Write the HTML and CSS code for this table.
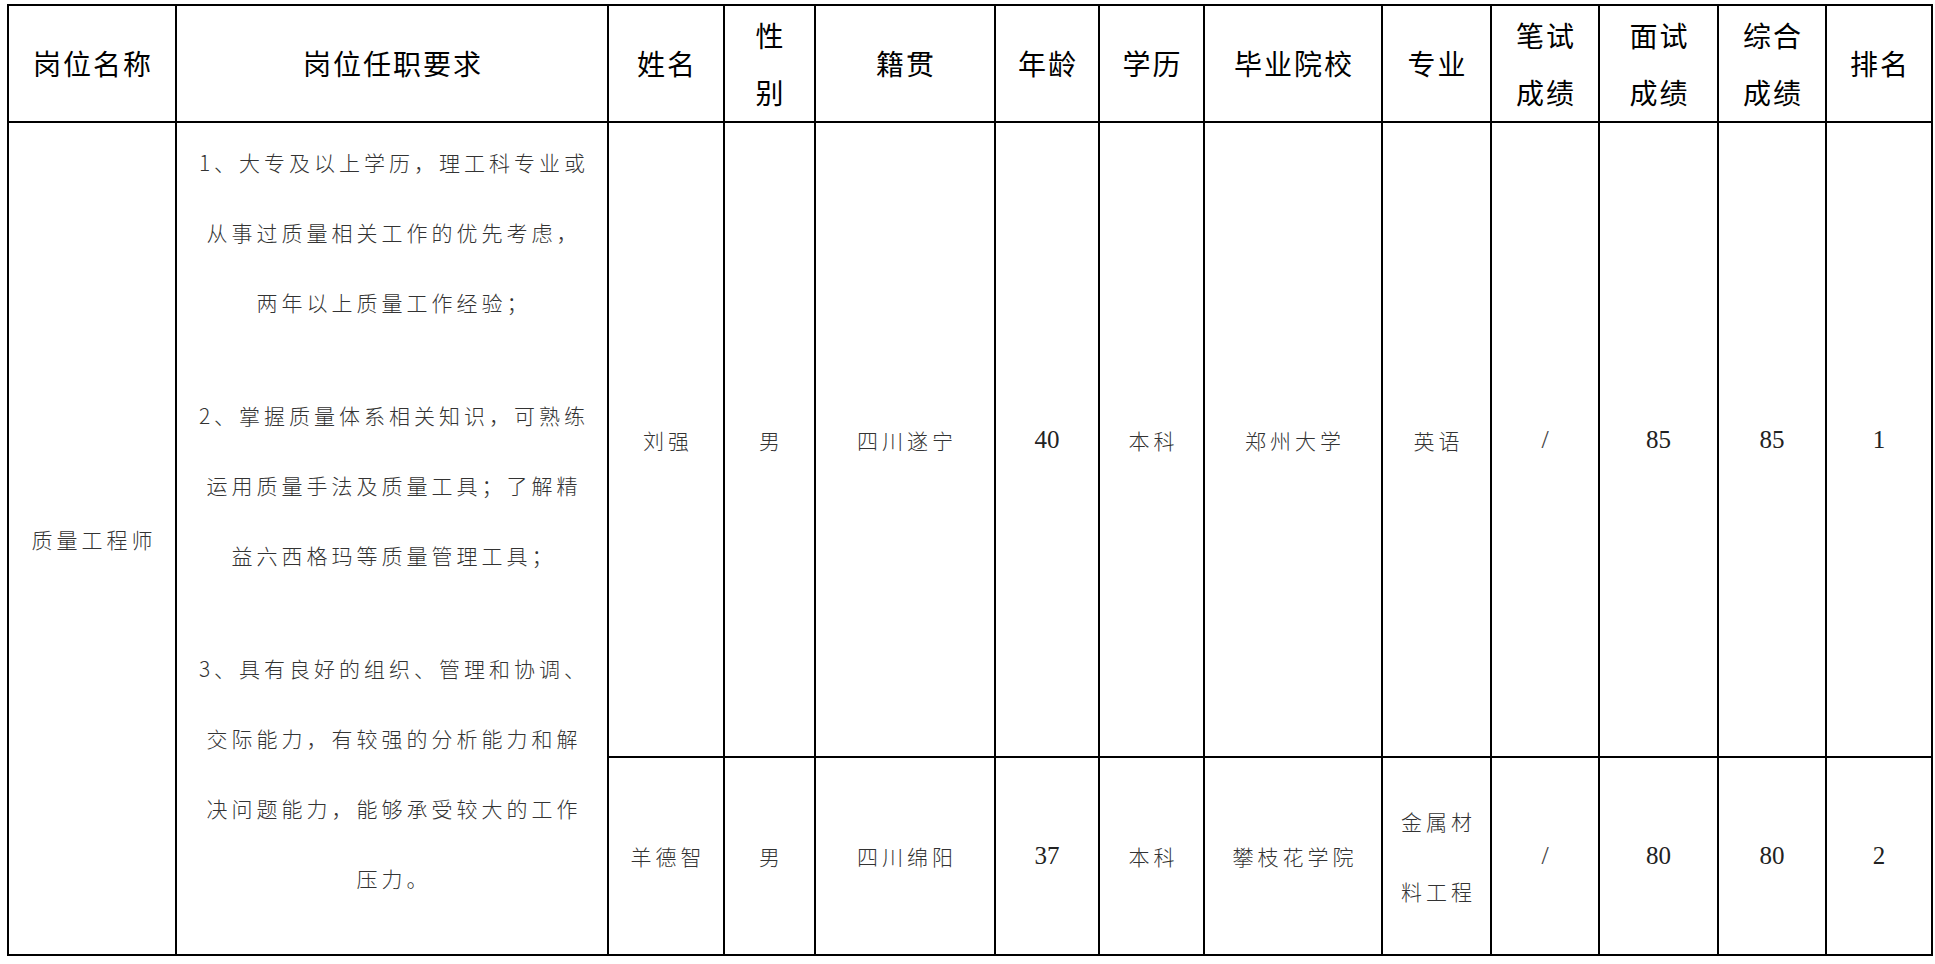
FILE: index.html
```html
<!DOCTYPE html>
<html lang="zh-CN">
<head>
<meta charset="utf-8">
<title>岗位成绩表</title>
<link rel="stylesheet" href="styles.css">
</head>
<body>
<div class="sheet">
  <div class="cell head">岗位名称</div>
  <div class="cell head">岗位任职要求</div>
  <div class="cell head">姓名</div>
  <div class="cell head">性<br>别</div>
  <div class="cell head">籍贯</div>
  <div class="cell head">年龄</div>
  <div class="cell head">学历</div>
  <div class="cell head">毕业院校</div>
  <div class="cell head">专业</div>
  <div class="cell head">笔试<br>成绩</div>
  <div class="cell head">面试<br>成绩</div>
  <div class="cell head">综合<br>成绩</div>
  <div class="cell head">排名</div>

  <div class="cell body tall">质量工程师</div>
  <div class="cell body tall req">
    <p>1、大专及以上学历，理工科专业或<br>从事过质量相关工作的优先考虑，<br>两年以上质量工作经验；</p>
    <p>2、掌握质量体系相关知识，可熟练<br>运用质量手法及质量工具；了解精<br>益六西格玛等质量管理工具；</p>
    <p>3、具有良好的组织、管理和协调、<br>交际能力，有较强的分析能力和解<br>决问题能力，能够承受较大的工作<br>压力。</p>
  </div>

  <div class="cell body">刘强</div>
  <div class="cell body">男</div>
  <div class="cell body">四川遂宁</div>
  <div class="cell body num">40</div>
  <div class="cell body">本科</div>
  <div class="cell body">郑州大学</div>
  <div class="cell body">英语</div>
  <div class="cell body num slash">/</div>
  <div class="cell body num">85</div>
  <div class="cell body num">85</div>
  <div class="cell body num">1</div>

  <div class="cell body">羊德智</div>
  <div class="cell body">男</div>
  <div class="cell body">四川绵阳</div>
  <div class="cell body num">37</div>
  <div class="cell body">本科</div>
  <div class="cell body">攀枝花学院</div>
  <div class="cell body">金属材<br>料工程</div>
  <div class="cell body num slash">/</div>
  <div class="cell body num">80</div>
  <div class="cell body num">80</div>
  <div class="cell body num">2</div>
</div>
</body>
</html>
```

FILE: styles.css
```css
html, body {
  margin: 0;
  padding: 0;
  background: #ffffff;
}

body {
  font-family: "Noto Sans CJK SC", "Noto Sans", sans-serif;
}

.sheet {
  margin: 4px 0 0 7px;
  width: 1926px;
  box-sizing: border-box;
  display: grid;
  grid-template-columns: 168px 432px 116px 91px 180px 104px 105px 178px 109px 108px 119px 108px 106px;
  grid-template-rows: 117px 635px 198px;
  border-top: 2px solid #000;
  border-left: 2px solid #000;
}

.cell {
  box-sizing: border-box;
  border-right: 2px solid #000;
  border-bottom: 2px solid #000;
  display: flex;
  align-items: center;
  justify-content: center;
  text-align: center;
}

.head {
  font-size: 28px;
  line-height: 57px;
  font-weight: 400;
  color: #000;
  letter-spacing: 2px;
  padding-left: 2px;
}

.body {
  font-size: 21px;
  line-height: 70px;
  font-weight: 300;
  color: #333;
  letter-spacing: 4px;
  padding-left: 4px;
}

.tall {
  grid-row: span 2;
}

.req {
  display: block;
  padding-top: 4px;
}

.req p {
  margin: 0;
}

.req p + p {
  margin-top: 43px;
}

.num {
  font-family: "Liberation Serif", "DejaVu Serif", serif;
  font-size: 25px;
  font-weight: 400;
  letter-spacing: 0;
  padding-left: 0;
  color: #222;
}

.slash {
  color: #444;
  font-size: 26px;
}
```
